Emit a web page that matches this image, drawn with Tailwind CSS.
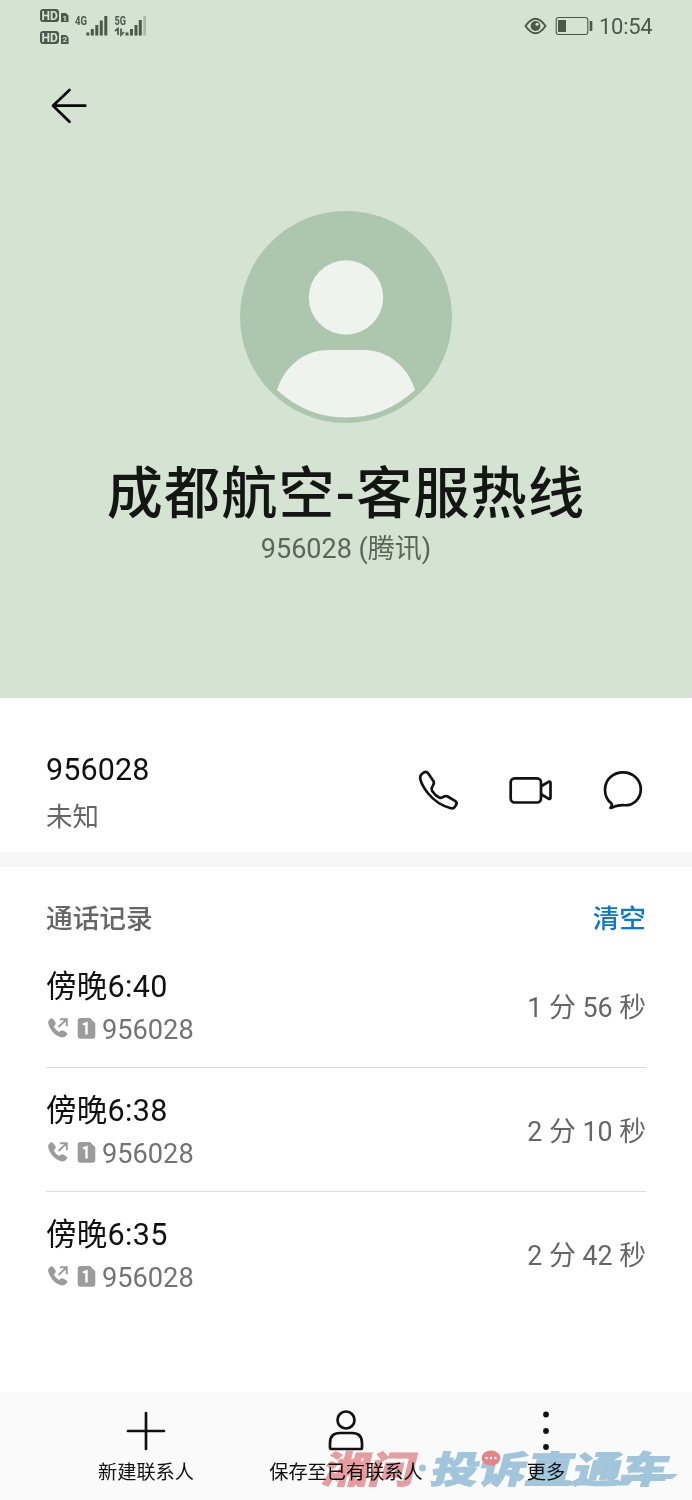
<!DOCTYPE html>
<html lang="zh-CN">
<head>
    <meta charset="UTF-8">
    <meta name="viewport" content="width=device-width, initial-scale=1.0">
    <title>成都航空-客服热线</title>
    <script src="https://cdn.jsdelivr.net/npm/@tailwindcss/browser@4"></script>
</head>
<body class="bg-white text-[#111] h-[1500px] flex flex-col overflow-hidden font-[Roboto,'Noto_Sans_CJK_SC',sans-serif]">
    <!-- ---------------- contact header ---------------- -->
    <header class="bg-[#d5e3d2] h-[698px] shrink-0 flex flex-col">
        <div class="h-[53px] pl-[39px] pr-10 flex items-center justify-between text-[#4c584c]">
            <svg class="w-[110px] h-[53px]" viewBox="39 0 110 53" fill="currentColor">
                <g fill="none" stroke="currentColor" stroke-width="1.6">
                    <rect x="40.8" y="9.8" width="17.4" height="11.4" rx="2.5" fill="currentColor"/>
                    <rect x="40.8" y="31.8" width="17.4" height="11.4" rx="2.5" fill="currentColor"/>
                </g>
                <g fill="#d5e3d2" font-family="Roboto" font-weight="700" font-size="12">
                    <text x="41.4" y="19.8" textLength="16.4" lengthAdjust="spacingAndGlyphs">HD</text>
                    <text x="41.4" y="41.8" textLength="16.4" lengthAdjust="spacingAndGlyphs">HD</text>
                </g>
                <path d="M61 13h5l2.5 2.5V22H61zM61 35h5l2.5 2.5V44H61z"/>
                <g fill="#d5e3d2" font-family="Roboto" font-weight="700" font-size="8">
                    <text x="62.6" y="20.6">1</text>
                    <text x="62.6" y="42.4">2</text>
                </g>
                <g font-family="Roboto" font-weight="700" font-size="12.5">
                    <text x="75" y="25" textLength="12" lengthAdjust="spacingAndGlyphs">4G</text>
                    <text x="114.5" y="25" textLength="11.5" lengthAdjust="spacingAndGlyphs">5G</text>
                </g>
                <path d="M86.3 32.5h3v3h-3zM90.8 29h3v6.5h-3zM95.3 25h3v10.5h-3zM99.8 20.5h3v15h-3zM104.3 16h3v19.5h-3z"/>
                <path d="M125.5 32.5h3v3h-3zM130 29h3v6.5h-3zM134.5 25h3v10.5h-3zM138.8 20h3v15.5h-3z"/>
                <path d="M143.3 16h2.7v19.5h-2.7z" opacity=".3"/>
                <path d="M115 31l3-2.5V35M121 28.5V35l3-3" fill="none" stroke="currentColor" stroke-width="1.7"/>
            </svg>
            <div class="flex items-center">
                <svg class="w-[70px] h-[53px]" viewBox="523 0 70 53" fill="none" stroke="currentColor">
                    <path d="M525.5 26Q535.5 11.5 545.5 26Q535.5 40.5 525.5 26z" stroke-width="1.9"/>
                    <circle cx="535.5" cy="26" r="4.9" fill="currentColor" stroke="none"/>
                    <circle cx="537" cy="24.3" r="1.5" fill="#d5e3d2" stroke="none"/>
                    <rect x="556.2" y="17.5" width="31.6" height="17" rx="2.5" stroke-width="1.1"/>
                    <path d="M558 20h8v12h-8zM589.7 21h2.6v10h-2.6z" fill="currentColor" stroke="none"/>
                </svg>
                <span class="ml-1.5 w-[53px] text-[22px] leading-[53px] tracking-[-0.3px] whitespace-nowrap">10:54</span>
            </div>
        </div>
        <svg class="ml-[48px] mt-[31px] w-[42px] h-[42px] shrink-0" viewBox="48 84 42 42" fill="none" stroke="#080808" stroke-width="2.7" stroke-linecap="round" stroke-linejoin="round">
            <path d="M85.3 105.7H53M69.5 90L53 105.7L69.5 121.7"/>
        </svg>
        <svg class="mx-auto mt-[85px] w-[212px] h-[212px] shrink-0" viewBox="0 0 212 212">
            <circle cx="106" cy="106" r="106" fill="#adc7ae"/>
            <circle cx="106" cy="86.5" r="37.2" fill="#eef3ee"/>
            <path d="M88 139h36c24 0 44 17 51 40q-30 27.5-69 27.5T37 179c7-23 27-40 51-40z" fill="#eef3ee"/>
        </svg>
        <h1 class="mt-[29px] text-center text-[56px] leading-[84px] tracking-[1.3px] font-medium whitespace-nowrap text-[#141614]">成都航空-客服热线</h1>
        <p class="text-center text-[27px] leading-[26px] whitespace-nowrap text-[#5b665a]">956028 (腾讯)</p>
    </header>

    <!-- ---------------- number ---------------- -->
    <section class="h-[154px] shrink-0 px-[46px] flex justify-between">
        <div class="pt-[52px]">
            <p class="text-[30.5px] leading-[40px] tracking-[0.1px]">956028</p>
            <p class="mt-[9px] text-[26.5px] leading-[36px] text-[#666]">未知</p>
        </div>
        <svg class="w-[230px] h-[50px] mt-[67px]" viewBox="416 765 230 50" fill="none" stroke="#111" stroke-width="2.7" stroke-linejoin="round" stroke-linecap="round">
            <path d="M421.8 774l2.3-1.7q2.3-1.2 4 1l5.3 7.7q1 1.7 0 3.5l-1.5 3q-.7 1.8.3 3.5q3 4.5 6.5 6.3q1.8 1 3.5.1l2.5-1.2q1.5-.5 3 .3l7.3 4.3q2.5 1.5 1.2 4l-1.5 2.2q-1.5 2-4.5 1q-13-3.5-22-14.5q-6.5-8-7.9-14.5q-.5-3.3 1.5-5z"/>
            <rect x="510.7" y="778.3" width="30.3" height="24.2" rx="4"/>
            <path d="M541.5 786l7-4.200q2-.8 2 1.200v14.500q0 2-2 1.200l-7-4.200"/>
            <path d="M611.500 803.500q-6.500-5.200-6.500-13.800c0-10 8-17.400 18-17.400s17.800 7.400 17.800 17c0 10-8 17-18.300 15.800q-5 .2-8 1.500q-2 1-4 1.200q2.200-2 1-4.300z"/>
        </svg>
    </section>
    <div class="h-[15px] shrink-0 bg-[#f6f6f6]"></div>

    <!-- ---------------- call log ---------------- -->
    <section class="px-[46px] flex-1">
        <div class="pt-[32px] flex justify-between text-[26.7px] leading-[40px] font-medium">
            <h2 class="text-[#666]">通话记录</h2>
            <a class="text-[#0a78d6]">清空</a>
        </div>
        <ul id="calls" class="mt-[5px]"></ul>
    </section>

    <!-- ---------------- bottom bar ---------------- -->
    <nav class="relative h-[108px] shrink-0 bg-[#fafafa] px-[46px] grid grid-cols-3 text-center text-[19.2px] leading-[28px] whitespace-nowrap">
        <div class="pt-[17px] flex flex-col items-center">
            <svg class="w-[44px] h-[44px]" viewBox="0 0 44 44" fill="none" stroke="#111" stroke-width="2.7" stroke-linecap="round">
                <path d="M22 4v36M4 22h36"/>
            </svg>
            <span class="mt-[6px]">新建联系人</span>
        </div>
        <div class="pt-[17px] flex flex-col items-center">
            <svg class="w-[44px] h-[44px]" viewBox="0 0 44 44" fill="none" stroke="#111" stroke-width="2.7" stroke-linecap="round">
                <circle cx="22" cy="11" r="8.5"/>
                <path d="M6 39V34q0-10 10-10H28q10 0 10 10V39q0 1-1 1H7q-1 0-1-1"/>
            </svg>
            <span class="mt-[6px]">保存至已有联系人</span>
        </div>
        <div class="pt-[17px] flex flex-col items-center">
            <svg class="w-[44px] h-[44px]" viewBox="0 0 44 44" fill="#111">
                <circle cx="22" cy="5.5" r="2.9"/>
                <circle cx="22" cy="22" r="2.9"/>
                <circle cx="22" cy="38" r="2.9"/>
            </svg>
            <span class="mt-[6px]">更多</span>
        </div>
        <!-- site stamp over the bar -->
        <svg class="absolute left-0 bottom-0 w-[692px] h-[80px] mix-blend-multiply" viewBox="0 1420 692 80" font-family="'Noto Sans CJK SC', sans-serif" font-weight="900" font-size="37">
            <g transform="translate(321 1483) skewX(-14)" stroke-width="1">
                <text x="0" y="0" textLength="92" lengthAdjust="spacingAndGlyphs" fill="#eba0a3" stroke="#eba0a3">湘问</text>
                <text x="108" y="0" textLength="237" lengthAdjust="spacingAndGlyphs" fill="#a4c9df" stroke="#a4c9df">投诉直通车</text>
            </g>
            <circle cx="422.5" cy="1468" r="3.5" fill="#a4c9df"/>
            <path d="M531 1481H632l-4 4.5H527zM640 1474h38l-6 5H638z" fill="#a4c9df"/>
            <ellipse cx="491" cy="1458" rx="9.5" ry="7.5" fill="#e8898c"/>
            <path d="M489 1464l6 2-1-4z" fill="#e8898c"/>
        </svg>
        <svg class="absolute left-[481px] top-[58px] w-[20px] h-[16px]" viewBox="0 0 20 16" fill="#fff">
            <circle cx="5.5" cy="8" r="1.2"/><circle cx="10" cy="8" r="1.2"/><circle cx="14.5" cy="8" r="1.2"/>
        </svg>
    </nav>

    <script>
        const calls = [
            { time: '傍晚6:40', duration: '1 分 56 秒' },
            { time: '傍晚6:38', duration: '2 分 10 秒' },
            { time: '傍晚6:35', duration: '2 分 42 秒' }
        ];

        document.getElementById('calls').innerHTML = calls.map(call => `
            <li class="h-[124px] flex items-center justify-between border-b border-[#dcdcdc] last:border-transparent">
                <div class="pt-[5px]">
                    <p class="text-[30.5px] leading-[44px] tracking-[0.3px]">${call.time}</p>
                    <div class="flex items-center text-[27.2px] leading-[42px] text-[#737373]">
                        <svg class="w-[56px] h-[28px] -mt-[4px]" viewBox="46 1014 56 28" fill="#9b9b9b">
                            <path d="M50 1019q2-1.5 3.5.5l2 3q.8 1.5-.8 3l-1 1q2 3.7 5.6 5.5l1.3-1.2q1.2-1 2.5-.2l3.4 2q1.5 1 .3 2.5q-2 2.9-5.5 2.2q-5-1.2-9-5.8q-3.7-4.5-4.2-8.5q-.2-2.5 1.9-4z"/>
                            <path d="M58.5 1027l8-7.5M60 1019.2h6.8v7" fill="none" stroke="#9b9b9b" stroke-width="1.9"/>
                            <path d="M80.5 1018h9.5l5.3 5.3V1036q0 2.8-2.8 2.8H80.5q-2.8 0-2.8-2.8V1020.8q0-2.8 2.8-2.8z"/>
                            <path d="M83 1024.5l3.5-1.3V1034.5" fill="none" stroke="#fff" stroke-width="2.4"/>
                        </svg>
                        <span>956028</span>
                    </div>
                </div>
                <span class="pt-[5px] text-[26.8px] text-[#666]">${call.duration}</span>
            </li>`).join('');
    </script>
</body>
</html>
